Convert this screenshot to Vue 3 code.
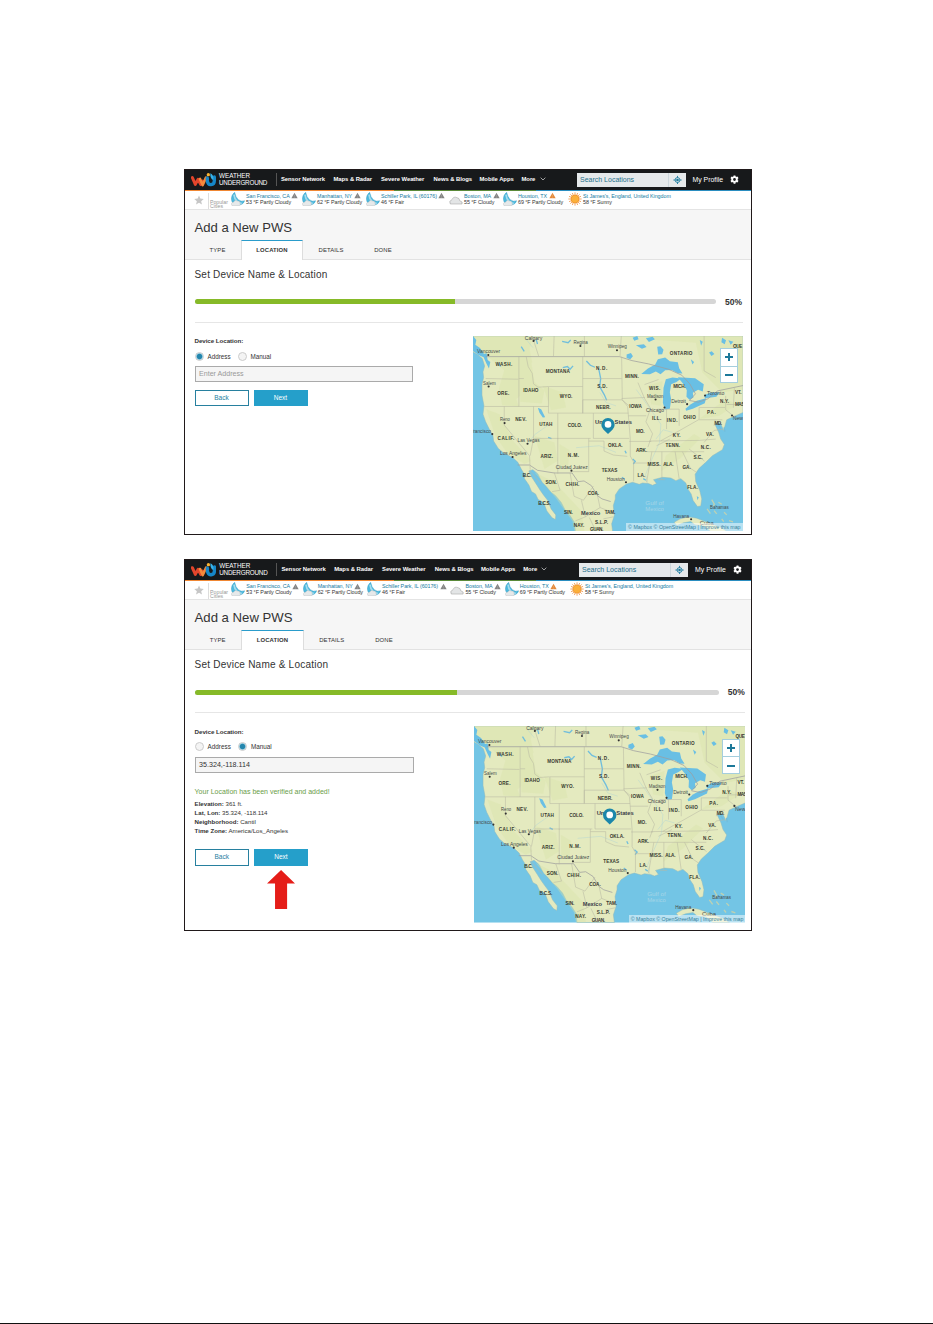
<template>
  <div class="page">
    <section v-for="panel in panels" :key="panel.mode" class="panel" :class="panel.mode">
      <div class="screen">
        <header class="topbar">
          <svg class="logo" viewBox="0 0 75 48">
            <path d="M4 17l9 20 8-15 8 15 5-10" fill="none" stroke="#e2452c" stroke-width="9" stroke-linejoin="round" stroke-linecap="round" />
            <path d="M27 21l8 18 10-22" fill="none" stroke="#f58a3c" stroke-width="8" stroke-linejoin="round" stroke-linecap="round" />
            <path d="M49 18v9q2 12 11 11 10-1 10-12V15" fill="none" stroke="#1687c9" stroke-width="10" stroke-linecap="round" />
            <path d="M58 4q11 5 9 20-10-3-9-20z" fill="#37b3ea" />
            <circle cx="52" cy="8" r="5" fill="#f9b233" />
          </svg>
          <div class="brand"><span>WEATHER</span><span class="brand-low">UNDERGROUND</span></div>
          <nav class="nav">
            <span v-for="item in nav" :key="item">{{ item }}</span>
            <svg class="chevron" viewBox="0 0 18 12"><path d="M2 2l7 7 7-7" /></svg>
          </nav>
          <div class="search">
            <span>Search Locations</span>
            <svg viewBox="0 0 24 24">
              <circle cx="12" cy="12" r="6.5" fill="none" stroke="#197a9e" stroke-width="2.4" />
              <circle cx="12" cy="12" r="3.500" fill="#197a9e" />
              <path d="M12 1v5M12 18v5M1 12h5M18 12h5" stroke="#197a9e" stroke-width="2.4" />
            </svg>
          </div>
          <span class="profile">My Profile</span>
          <svg class="gear" viewBox="0 0 24 24">
            <circle cx="12" cy="12" r="6.2" fill="none" stroke="#fff" stroke-width="5" />
            <path d="M12 1v4M12 19v4M2.5 6.5L6 8.500M18 15.500l3.500 2M2.500 17.500L6 15.500M18 8.500l3.500-2" stroke="#fff" stroke-width="5" />
          </svg>
        </header>
        <div class="stripe"></div>

        <div class="cities">
          <svg class="star" viewBox="0 0 24 24"><path d="M12 1l3.200 7.600 8.200.7-6.200 5.400 1.900 8L12 18.400 4.900 22.700l1.900-8L.6 9.300l8.200-.7z" /></svg>
          <div class="popular"><span>Popular</span><span>Cities</span></div>
          <div v-for="city in cities" :key="city.name" class="city">
            <svg class="sky" viewBox="0 0 42 42">
              <g v-if="city.icon === 'night'">
                <path d="M11 1q3 15 11 22t19 3q-5 14-21 13Q3 38 1 22 1 8 11 1z" fill="#4db9dd" stroke="#2b93bd" />
                <path d="M9 8q1 13 9 20t14 5" fill="none" stroke="#a5dcee" stroke-width="5" />
                <path d="M3 41q-6-9 5-11 4-8 12-3 8-1 7 7 4 5-3 7z" fill="#e6e9ea" stroke="#a9adb0" />
              </g>
              <path v-else-if="city.icon === 'cloud'" d="M4 36q-6-9 5-13 4-11 15-6 8 1 8 9 11 3 7 10z" fill="#e3e5e6" stroke="#999" stroke-width="1.500" />
              <g v-else>
                <path d="M21 1v40M1 21h40M7 7l28 28M35 7L7 35M13 3l16 36M29 3L13 39M3 13l36 16M3 29l36-16" stroke="#f0964a" stroke-width="2.500" />
                <circle cx="21" cy="21" r="12" fill="#fbb03b" stroke="#ed8b22" stroke-width="2" />
              </g>
            </svg>
            <div class="city-text">
              <div class="city-name">
                <span>{{ city.name }}</span>
                <svg v-if="city.alert" class="alert" viewBox="0 0 20 18">
                  <path d="M10 1l9 16H1z" :fill="city.alert" />
                  <path d="M10 7v5M10 13.500v2" stroke="#fff" stroke-opacity=".35" stroke-width="1.500" />
                </svg>
              </div>
              <div class="city-temp">{{ city.temp }}</div>
            </div>
          </div>
        </div>

        <div class="heading">
          <h1>Add a New PWS</h1>
          <div class="tabs">
            <span v-for="tab in tabs" :key="tab" class="tab" :class="{ active: tab === 'LOCATION' }">{{ tab }}</span>
          </div>
        </div>

        <main class="content">
          <h2>Set Device Name &amp; Location</h2>
          <div class="progress">
            <div class="track"><div class="fill" :style="{ width: progress + '%' }"></div></div>
            <b>{{ progress }}%</b>
          </div>
          <div class="columns">
            <div class="form">
              <div class="form-label">Device Location:</div>
              <div class="radios">
                <i class="radio" :class="{ on: panel.mode === 'address' }"></i><span class="first">Address</span>
                <i class="radio" :class="{ on: panel.mode === 'manual' }"></i><span>Manual</span>
              </div>
              <div class="field">{{ panel.field }}</div>
              <div v-if="panel.details" class="verified">
                <p>Your Location has been verified and added!</p>
                <div v-for="row in panel.details" :key="row[0]"><b>{{ row[0] }}:</b> {{ row[1] }}</div>
              </div>
              <div class="buttons">
                <div class="btn">Back</div>
                <div class="btn primary">Next</div>
              </div>
              <svg v-if="panel.details" class="arrow" viewBox="0 0 28 39"><path d="M14 0L28 13.500H20V39H8V13.500H0z" /></svg>
            </div>

            <div class="map">
              <svg viewBox="20 20 812 588" preserveAspectRatio="none">
                <rect x="20" y="20" width="812" height="588" fill="#73c5e5" />
                <path class="land" :d="land" />
                <path class="land" d="M625 580l18-10 25-6 25 4 20 8 28 10 25 10 18 12H735l-20-16-28-4-12-10-22 4-20 8z" />
                <path class="isle" d="M738 512l8 14-6 8M758 520l10 6M745 545l8 10M775 550l8 8M790 575l12 4M724 540l10 14M768 570l6 8" />
                <path class="forest" d="M20 20h180l-10 40 8 40-30 30 10 55-28 25 8 22-50-4-10-50 16-55-44-36-50-20zM160 90l35 8 10 60 30 25-8 40-65-5zM230 170l60 20 10 45-45 8zM60 240l40 15 40 80 55 60-20 10-50-30-38-55zM205 320l60 20 10 55-40 25zM280 345l30 18-4 48-25 2zM205 430l60 30 80 85 10 62h-30l-6-30-50-70zM545 170l45-15-4 75-30-5zM600 380l85-65 20 12-60 60-60 40zM700 270l80-60 35 15-55 35zM540 30l150 10 20 90 60 60 60-10V20H540z" />
                <path class="water" d="M20 20l10 12-3 14 14 10 12 18 8-2 3 20 8 6-4 20-8-16-8-18-14-6-18-13z" />
                <path class="water" d="M526 134l20-16 22-12 8-16 22-5 14 11 24 3 4 18 10 16-14-1-18-10-20 1-14 12-14-8-18 8z" />
                <path class="water" d="M600 150l20-5 26 3-14 10-16 7-4 24 4 22-4 28-15 2-6-20 2-45z" />
                <path class="water" d="M636 144l52 3 26 18-3 22-14-5-16 9 2 14-12 7-9-9 1-20-8-16z" />
                <path class="water" d="M659 239l16-14 18-10 28-8-4 15-36 17-20 6z" />
                <path class="water" d="M714 199l20-9 28-1-10 14-34 4z" />
                <path class="water" d="M215 236l10 4 12 24-7 1-10-14zM574 52l10-1 9 10-4 14-12 1zM482 76l13-5 6 10-8 9-11-4zM510 48l24-3 8 8-14 5zM540 27l20-5 7 8-18 8zM500 25l14-5 4 10-13 4zM730 70l8-4 8 8-9 6zM769 25l12 8-4 12-10-6zM702 32l9 5-5 12zM675 90l10 8-5 8zM788 33l15 4-8 9zM693 502l6 3-4 9z" />
                <path class="river" d="M398 118l6 30-3 24 14 25 7 16M361 95l12 13 14 6M290 115l14-3 8 8 9-10M99 103l4 9M165 52l9 14M288 36l18 4 8-8M246 325l10 4M477 365l4 8M500 390l8 7-6 8M468 445l8 6M532 449l8 5M758 288l8 12M775 295l3 13M210 30l4 14" />
                <path class="river thin" d="M545 462l-6-25 14-35 28-62 4-55-24-34-50-70M185 345l20-28 40-28M450 370l-50-20-70 6M620 310l-28-8-22 28M450 230l-30-10-18-30M200 55l-20-25" />
                <path class="country" d="M58 82H460l38 12 50 10 60 16 40 18 24 26 17 30-18 20 27 5 28-10 30-24 76-16M154 408h36l24 16 50 8h54l18 26 18-2 22 14 18 30 14 10 26 8" />
                <path class="state" d="M198 20l20 62M264 20l-2 62M355 20v62M462 82l4-62M715 20v105l35 20M58 148l98 2M158 82v150M54 232h193M158 148l15 0M180 82l6 30 12 20 4 32 14 10 30-2M247 172v80h103V82M350 148h117M350 212h118l24 20M247 172h103M202 232v96H374M114 232v56l76 92 2 42M192 380l10-52M275 328v106M275 252v78M350 212v40h32v76H490M382 252h105M368 328v100h-50M368 336h46v30l28 12 42 4M467 82l2 130 16 20 8 97 0 52 10 18v58M467 208l70-3M487 260h54M516 160l20 48 18 30-14 40 20 36-14 40M503 402h42M490 337h66M545 368h170M558 368l-16 92M588 368v84M628 368l12 82M550 336l150-2 50-4M602 240v60M640 240v50M575 240h65M700 235v36l-60 34-55 30M700 235h78M700 272h70M650 368l24 50 18 12M670 360l46 36M715 340l30-36 28-4M780 200v42l28 22M806 176l-3 60M783 226h49M536 166l42-15M612 330l-40 20M748 272l-3 18M598 452h-22" />
                <path class="state" d="M190 424l34 40M264 430l18 54-24 4M312 432l12 70 28 12M352 514l30-42M346 514l12 50-30 12M358 564l44-28 36 14M402 536l-8-38M370 566l20 42M412 570l30-6" />
                <text
                  v-for="(place, i) in places"
                  :key="i"
                  :x="place[1]"
                  :y="place[2]"
                  :textLength="place[3]"
                  :class="place[4]"
                  :lengthAdjust="place[4] === 'st' ? 'spacing' : 'spacingAndGlyphs'"
                >{{ place[0] }}</text>
                <circle v-for="(dot, i) in dots" :key="'d' + i" :cx="dot[0]" :cy="dot[1]" r="3.200" fill="#333" />
                <path d="M426 315l-14-14a20 20 0 1 1 28 0z" fill="#1b87ab" />
                <circle cx="426" cy="286" r="10" fill="#fff" />
              </svg>
              <div class="zoom-box"><span class="plus"></span><span></span></div>
              <div class="credit">© Mapbox © OpenStreetMap | Improve this map</div>
            </div>
          </div>
        </main>
      </div>
    </section>
  </div>
</template>

<script setup>
import { ref } from 'vue'

const progress = ref(50)

const nav = ['Sensor Network', 'Maps & Radar', 'Severe Weather', 'News & Blogs', 'Mobile Apps', 'More']
const tabs = ['TYPE', 'LOCATION', 'DETAILS', 'DONE']

const cities = [
  { name: 'San Francisco, CA', temp: '53 °F Partly Cloudy', icon: 'night', alert: '#858585' },
  { name: 'Manhattan, NY', temp: '62 °F Partly Cloudy', icon: 'night', alert: '#858585' },
  { name: 'Schiller Park, IL (60176)', temp: '46 °F Fair', icon: 'night', alert: '#858585' },
  { name: 'Boston, MA', temp: '55 °F Cloudy', icon: 'cloud', alert: '#858585' },
  { name: 'Houston, TX', temp: '69 °F Partly Cloudy', icon: 'night', alert: '#e58a3c' },
  { name: "St James's, England, United Kingdom", temp: '58 °F Sunny', icon: 'sun' },
]

const panels = [
  { mode: 'address', field: 'Enter Address' },
  {
    mode: 'manual',
    field: '35.324,-118.114',
    details: [
      ['Elevation', '361 ft.'],
      ['Lat, Lon', '35.324, -118.114'],
      ['Neighborhood', 'Cantil'],
      ['Time Zone', 'America/Los_Angeles'],
    ],
  },
]

// mainland outline, clockwise from the north west
const land =
  'M20 20L20 68 34 76 48 88 55 110 50 128 52 145 47 165 47 198 53 230 50 255 58 278 70 302 80 320 82 336 96 358 112 372 140 386 155 400 165 420 176 438 174 448 188 468 196 488 208 495 216 512 232 520 242 546 258 567 268 572 269 558 255 540 245 515 232 498 222 484 210 465 197 445 188 426 200 422 215 435 228 460 240 472 255 490 268 500 285 520 298 545 312 560 325 580 328 608 440 608 437 585 445 560 442 530 448 510 448 498 460 480 482 465 500 460 520 466 530 462 548 464 560 469 572 464 563 452 590 445 615 447 630 455 645 449 660 462 666 480 676 495 682 515 695 533 705 531 708 510 702 485 690 458 688 436 700 418 720 400 740 380 770 362 776 346 765 330 759 310 748 286 764 282 774 304 783 272 800 264 832 250 832 20Z'

// text, x, baseline, width, style
const places = [
  ['Calgary', 176, 32, 52, 'town'],
  ['Regina', 322, 45, 43, 'town'],
  ['Winnipeg', 425, 56, 58, 'town'],
  ['ONTARIO', 612, 77, 68, 'st'],
  ['QUE', 802, 57, 28, 'st'],
  ['Vancouver', 32, 71, 70, 'town'],
  ['WASH.', 88, 109, 50, 'st'],
  ['MONTANA', 239, 131, 72, 'st'],
  ['N.D.', 390, 122, 34, 'st'],
  ['MINN.', 477, 147, 42, 'st'],
  ['Salem', 50, 167, 38, 'town'],
  ['ORE.', 93, 196, 36, 'st'],
  ['IDAHO', 171, 189, 46, 'st'],
  ['WYO.', 281, 206, 38, 'st'],
  ['S.D.', 394, 177, 30, 'st'],
  ['WIS.', 549, 182, 34, 'st'],
  ['MICH.', 622, 177, 38, 'st'],
  ['Madison', 543, 205, 50, 'town'],
  ['Toronto', 724, 196, 52, 'town'],
  ['VT.', 808, 195, 20, 'st'],
  ['NEBR.', 390, 240, 44, 'st'],
  ['IOWA', 490, 236, 38, 'st'],
  ['Detroit', 616, 222, 44, 'town'],
  ['N.Y.', 763, 223, 27, 'st'],
  ['MASS.', 808, 230, 38, 'st'],
  ['Chicago', 540, 250, 54, 'town'],
  ['PA.', 724, 255, 26, 'st'],
  ['Reno', 101, 275, 30, 'town'],
  ['NEV.', 147, 275, 34, 'st'],
  ['UTAH', 219, 292, 40, 'st'],
  ['COLO.', 305, 293, 43, 'st'],
  ['United States', 387, 286, 111, 'nation'],
  ['ILL.', 558, 274, 28, 'st'],
  ['IND.', 603, 278, 32, 'st'],
  ['OHIO', 652, 269, 38, 'st'],
  ['MD.', 746, 287, 23, 'st'],
  ['New York', 801, 273, 66, 'town'],
  ['San Francisco', -18, 312, 92, 'town'],
  ['CALIF.', 94, 333, 50, 'st'],
  ['Las Vegas', 154, 340, 66, 'town'],
  ['MO.', 510, 312, 26, 'st'],
  ['KY.', 621, 325, 23, 'st'],
  ['VA.', 721, 322, 23, 'st'],
  ['TENN.', 599, 353, 44, 'st'],
  ['N.C.', 705, 361, 30, 'st'],
  ['OKLA.', 426, 354, 44, 'st'],
  ['ARK.', 510, 369, 34, 'st'],
  ['Los Angeles', 101, 378, 80, 'town'],
  ['ARIZ.', 223, 387, 38, 'st'],
  ['N.M.', 305, 385, 34, 'st'],
  ['S.C.', 683, 390, 27, 'st'],
  ['Ciudad Juárez', 269, 419, 96, 'town'],
  ['MISS.', 545, 411, 39, 'st'],
  ['ALA.', 592, 411, 31, 'st'],
  ['GA.', 650, 419, 25, 'st'],
  ['TEXAS', 407, 429, 47, 'st'],
  ['Houston', 422, 456, 54, 'town'],
  ['LA.', 515, 443, 23, 'st'],
  ['B.C.', 170, 445, 25, 'st'],
  ['SON.', 238, 465, 34, 'st'],
  ['CHIH.', 298, 472, 42, 'st'],
  ['COA.', 365, 499, 34, 'st'],
  ['FLA.', 664, 479, 32, 'st'],
  ['B.C.S.', 216, 527, 38, 'st'],
  ['Gulf of', 538, 529, 56, 'sea'],
  ['Mexico', 538, 547, 56, 'sea'],
  ['SIN.', 294, 556, 26, 'st'],
  ['Mexico', 345, 558, 58, 'nation'],
  ['TAM.', 416, 556, 32, 'st'],
  ['NAY.', 323, 595, 32, 'st'],
  ['S.L.P.', 387, 584, 39, 'st'],
  ['GUAN.', 372, 607, 40, 'st'],
  ['Bahamas', 733, 539, 56, 'town'],
  ['Havana', 622, 567, 48, 'town'],
  ['Cuba', 702, 588, 42, 'town'],
]

const dots = [
  [202, 35], [343, 50], [453, 63], [66, 77], [67, 172], [569, 211], [596, 235], [664, 225],
  [718, 199], [799, 259], [115, 282], [78, 315], [184, 344], [139, 384], [316, 425], [480, 460], [676, 571],
]
</script>

<style>
body {
  margin: 0;
  background: #fff;
}
</style>

<style scoped>
.page {
  box-sizing: border-box;
  width: 933px;
  height: 1324px;
  padding: 169px 0 0 184px;
  border-bottom: 1px solid #111;
  font-family: "Liberation Sans", Arial, sans-serif;
  color: #333;
}

.panel {
  box-sizing: border-box;
  width: 568px;
  height: 366px;
  border: 1px solid #20191a;
  overflow: hidden;
  background: #fff;
}

.panel.manual {
  height: 372px;
  margin-top: 24px;
}

.manual .screen {
  zoom: 1.0053;
}

.screen span,
.screen div {
  white-space: nowrap;
}

.topbar {
  display: flex;
  align-items: center;
  box-sizing: border-box;
  height: 20px;
  padding-bottom: 2px;
  background: #17191b;
  color: #fff;
}

.logo {
  width: 25px;
  height: 16px;
  margin: 2px 0 0 6px;
}

.brand {
  display: flex;
  flex-direction: column;
  box-sizing: border-box;
  width: 58px;
  height: 13px;
  margin: 1px 0 0 3px;
  border-right: 1px solid #555;
  font-size: 6.300px;
  line-height: 6.500px;
}

.brand-low {
  letter-spacing: -0.200px;
}

.nav {
  display: grid;
  grid-template-columns: 52.500px 47.500px 52.500px 46px 42px 18px 7px;
  align-items: center;
  margin-left: 4px;
  font-size: 5.900px;
  font-weight: bold;
  letter-spacing: -0.060px;
}

.chevron {
  width: 6px;
  fill: none;
  stroke: #fff;
  stroke-width: 1.800;
}

.search {
  display: flex;
  align-items: center;
  justify-content: space-between;
  box-sizing: border-box;
  width: 109px;
  height: 14px;
  margin: 1px 0 0 30px;
  padding-left: 3.500px;
  background: #e5e9eb;
  color: #26718c;
  font-size: 7px;
}

.search svg {
  width: 9px;
  padding: 2.500px 4px;
  border-left: 1px solid #ccd7dc;
}

.profile {
  margin-left: 7px;
  font-size: 6.900px;
}

.gear {
  width: 9px;
  margin-left: 7px;
}

.stripe {
  height: 1px;
  background: linear-gradient(90deg, #f08733 0 37%, #5b8a3a 37% 62%, #2a8dc0 62%);
}

.cities {
  display: grid;
  grid-template-columns: 21px 25px 71px 64px 83px 54px 65px 110px;
  box-sizing: border-box;
  height: 19px;
  border-bottom: 1px solid #e4e4e4;
  background: #fff;
}

.star {
  width: 10px;
  margin: 3.500px 0 0 8.500px;
  fill: #c6c6c6;
}

.popular {
  display: flex;
  flex-direction: column;
  margin: 2px 4px 0 2px;
  padding: 7px 0 0 1px;
  border-left: 1px solid #ddd;
  color: #999;
  font-size: 5.200px;
  line-height: 4.200px;
}

.city {
  display: flex;
  gap: 1px;
}

.sky {
  flex: none;
  width: 14px;
  height: 14px;
  margin-top: 1px;
}

.city-text {
  padding-top: 1.500px;
  font-size: 5.350px;
  line-height: 6.800px;
  letter-spacing: -0.050px;
}

.city-name {
  display: flex;
  align-items: center;
  gap: 1.500px;
  height: 6.800px;
  color: #147a9f;
}

.alert {
  width: 7px;
  height: 7px;
}

.heading {
  box-sizing: border-box;
  height: 49.500px;
  border-bottom: 1px solid #e2e2e2;
  background: #f6f6f6;
}

h1 {
  margin: 0;
  padding: 9.500px 0 0 9.500px;
  font-size: 13.100px;
  font-weight: normal;
  line-height: 16px;
  height: 20px;
}

h2 {
  margin: 0;
  height: 30px;
  font-size: 10px;
  font-weight: normal;
  line-height: 30px;
  letter-spacing: 0.200px;
}

.tabs {
  display: flex;
  height: 20px;
  margin-left: 9px;
  font-size: 5.900px;
  line-height: 21px;
  letter-spacing: 0.120px;
}

.tab {
  box-sizing: border-box;
  width: 47px;
  text-align: center;
}

.tab.active {
  width: 62px;
  border: 1px solid #ddd;
  border-top-color: #2a9ccb;
  border-bottom: 0;
  background: #fff;
  font-weight: bold;
  line-height: 19px;
}

.tab:nth-child(3) {
  width: 56px;
}

.tab:nth-child(4) {
  width: 48px;
}

.content {
  padding-left: 9.500px;
}

.progress {
  display: flex;
  align-items: center;
  gap: 9px;
  height: 24px;
  margin-bottom: 8px;
  font-size: 8.500px;
}

.track {
  width: 521.500px;
  height: 5px;
  border-radius: 3px;
  background: #d6d6d6;
  overflow: hidden;
}

.fill {
  height: 5px;
  background: #86ba28;
}

.columns {
  display: flex;
  width: 548px;
  border-top: 1px solid #e6e6e6;
  padding-top: 13px;
}

.form {
  width: 278px;
  padding-top: 0.500px;
  font-size: 6.300px;
}

.form-label {
  height: 12px;
  font-size: 6.200px;
  font-weight: bold;
  line-height: 10px;
  letter-spacing: -0.050px;
}

.radios {
  display: flex;
  align-items: center;
  height: 16px;
  gap: 4px;
}

.radio {
  box-sizing: border-box;
  width: 9px;
  height: 9px;
  border: 1px solid #ccc;
  border-radius: 50%;
  background: #f4f4f4;
}

.radio.on {
  background: radial-gradient(circle, #2486ad 0 2.200px, #b9e2f1 3.400px);
}

.first {
  margin-right: 3px;
}

.field {
  box-sizing: border-box;
  width: 218px;
  height: 15.500px;
  margin-top: 2px;
  padding-left: 3.500px;
  border: 1px solid #aaa;
  background: #f5f5f5;
  color: #999;
  font-size: 7.100px;
  line-height: 14px;
}

.manual .field {
  color: #333;
}

.verified {
  height: 59px;
  padding-top: 13px;
  box-sizing: content-box;
  font-size: 6.100px;
  line-height: 9.100px;
}

.verified p {
  margin: 0 0 2px;
  color: #6a9d49;
  font-size: 7px;
  line-height: 11px;
}

.buttons {
  display: flex;
  gap: 5px;
  margin-top: 8.500px;
}

.verified + .buttons {
  margin-top: 4.500px;
}

.btn {
  box-sizing: border-box;
  width: 54px;
  height: 16px;
  border: 1px solid #27809f;
  background: #fff;
  color: #27809f;
  font-size: 6.500px;
  line-height: 14px;
  text-align: center;
}

.btn.primary {
  border-color: #259fca;
  background: #259fca;
  color: #fff;
}

.arrow {
  display: block;
  width: 28px;
  height: 39px;
  margin: 4px 0 0 72px;
  fill: #e51d18;
}

.map {
  position: relative;
  width: 270px;
  height: 195.500px;
}

.map > svg {
  display: block;
  width: 100%;
  height: 100%;
}

.land {
  fill: #e4eabf;
  stroke: #8eb9bd;
  stroke-width: 1.500;
}

.isle {
  fill: none;
  stroke: #bdd1b3;
  stroke-width: 4;
}

.forest {
  fill: #d6e3a6;
  opacity: 0.35;
}

.water {
  fill: #69bfe4;
}

.river {
  fill: none;
  stroke: #72bedc;
  stroke-width: 4;
}

.river.thin {
  stroke: #a9d2d6;
  stroke-width: 1.200;
}

.country {
  fill: none;
  stroke: #9d9d9e;
  stroke-width: 2.200;
}

.state {
  fill: none;
  stroke: #b8b7a3;
  stroke-width: 1.600;
}

.st {
  font-size: 14px;
  font-weight: bold;
  fill: #37392f;
}

.town {
  font-size: 17px;
  fill: #454a4b;
}

.nation {
  font-size: 18px;
  font-weight: bold;
  fill: #3b4048;
}

.sea {
  font-size: 16px;
  fill: #a5d5e7;
}

/* zoom control and attribution lie over the map */
.zoom-box {
  position: absolute;
  top: 12.500px;
  right: 5px;
  box-sizing: border-box;
  width: 18px;
  height: 35px;
  border: 1px solid #a5cedd;
  background: #fff;
}

.zoom-box span {
  display: flex;
  align-items: center;
  justify-content: center;
  height: 16.500px;
}

.zoom-box .plus {
  border-bottom: 1px solid #a5cedd;
}

.zoom-box span::before {
  content: "";
  width: 8px;
  height: 2px;
  background: #1c7899;
}

.zoom-box .plus::before {
  height: 8px;
  background:
    linear-gradient(#1c7899, #1c7899) center / 8px 2px no-repeat,
    linear-gradient(#1c7899, #1c7899) center / 2px 8px no-repeat;
}

.credit {
  position: absolute;
  right: 0;
  bottom: 0;
  padding: 0 2px;
  background: rgba(255, 255, 255, 0.5);
  color: #357f9a;
  font-size: 5.250px;
  line-height: 8px;
}
</style>
